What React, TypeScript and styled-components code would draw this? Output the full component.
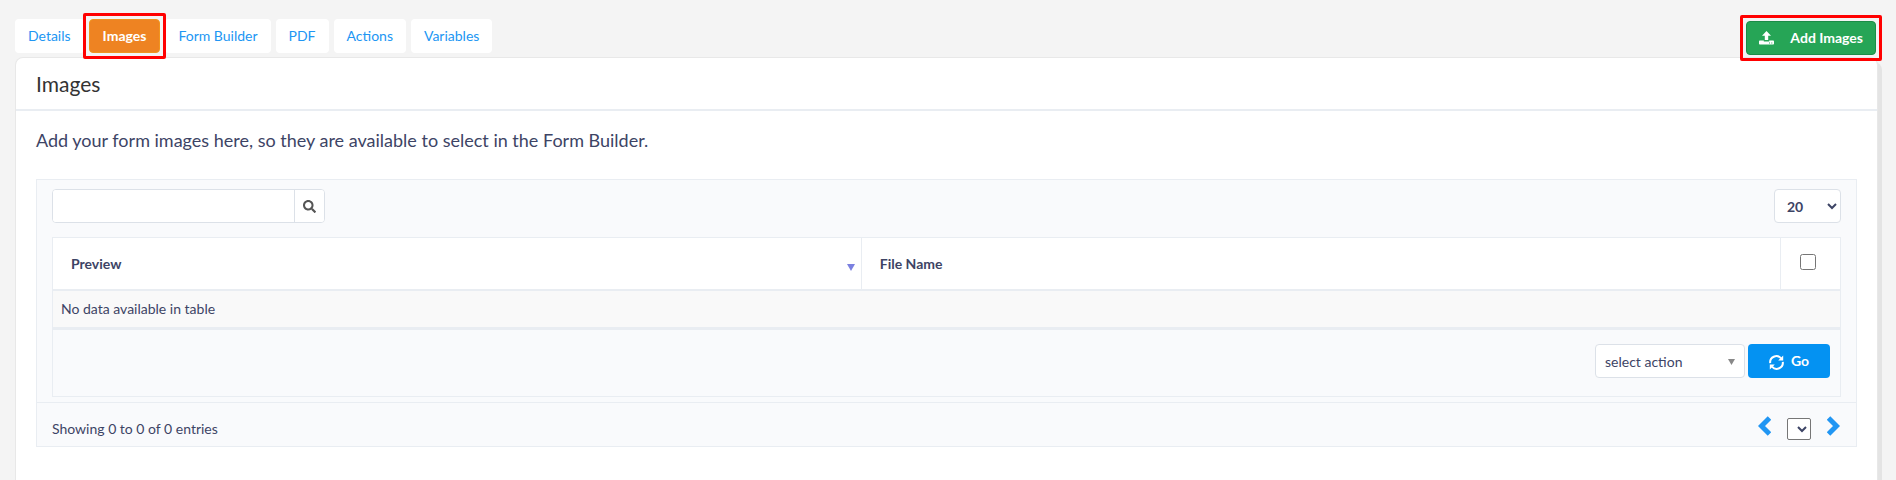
import React from 'react';
import styled, { createGlobalStyle, css } from 'styled-components';
import { FaSearch } from 'react-icons/fa';

const line = '#e9edf2';
const ink = '#3d4465';
const link = '#2196f3';

const GlobalStyle = createGlobalStyle`
  * { box-sizing: border-box; }
  body {
    margin: 0;
    background: #f4f4f4;
    color: ${ink};
    font: 14px/20px Lato, "Liberation Sans", sans-serif;
  }
  button, input, select { font: inherit; color: inherit; margin: 0; }
`;

const Page = styled.main`
  display: flex;
  flex-direction: column;
  min-height: 100vh;
  padding: 19px 18px 0 15px;
`;

const TopBar = styled.div`
  display: flex;
  justify-content: space-between;
  align-items: flex-start;
  height: 38px;
`;

const Tabs = styled.nav`
  display: flex;
  gap: 5px;
`;

const highlight = css`
  position: relative;
  z-index: 1;
  &::after {
    content: '';
    position: absolute;
    inset: -7px;
    border: 3px solid #f00;
    border-radius: 2px;
    pointer-events: none;
  }
`;

const Tab = styled.a<{ $active?: boolean }>`
  height: 34px;
  padding: 7px 13px;
  border-radius: 4px;
  background: #fff;
  color: ${link};
  text-decoration: none;
  ${(p) =>
    p.$active &&
    css`
      ${highlight}
      padding: 6px 13px;
      border: 1px solid #f0941d;
      background: #ee8322;
      color: #fff;
      font-weight: 700;
    `}
`;

const AddButton = styled.button`
  ${highlight}
  display: flex;
  align-items: center;
  gap: 16px;
  height: 34px;
  margin: 2px 2px 0 0;
  padding: 0 12px;
  border: 1px solid #1c8c47;
  border-radius: 4px;
  background: #26a556;
  color: #fff;
  font-weight: 700;
`;

const Card = styled.section`
  flex: 1;
  border: 1px solid #e8e8e8;
  border-bottom: 0;
  border-radius: 8px 8px 0 0;
  background: #fff;
  box-shadow: 4px 5px 0 #e4e4e4;
`;

const CardTitle = styled.h1`
  margin: 0;
  padding: 15px 20px 14px;
  border-bottom: 2px solid ${line};
  color: #333;
  font-size: 21px;
  line-height: 22px;
  font-weight: 400;
`;

const CardBody = styled.div`
  padding: 17px 20px;
`;

const Intro = styled.p`
  margin: 0 0 27px;
  font-size: 18px;
  line-height: 24px;
`;

const Panel = styled.div`
  border: 1px solid ${line};
  background: #f9fafc;
`;

const Tools = styled.div`
  display: flex;
  justify-content: space-between;
  padding: 9px 15px 14px;
`;

const SearchBox = styled.form`
  display: flex;
  width: 273px;
  height: 34px;
  border: 1px solid #dce1e8;
  border-radius: 4px;
  background: #fff;
  overflow: hidden;
`;

const SearchInput = styled.input`
  flex: 1;
  min-width: 0;
  padding: 0 12px;
  border: 0;
  border-right: 1px solid #dce1e8;
`;

const SearchButton = styled.button`
  display: grid;
  place-items: center;
  width: 29px;
  padding: 0;
  border: 0;
  background: #fff;
  color: #555;
`;

const PageSize = styled.select`
  width: 67px;
  height: 34px;
  padding: 0 0 0 8px;
  border: 1px solid #dce1e8;
  border-radius: 4px;
  background: #fff;
  font-weight: 700;
`;

const TableWrap = styled.div`
  padding: 0 15px 5px;
`;

const Table = styled.table`
  width: 100%;
  table-layout: fixed;
  border: 1px solid ${line};
  border-spacing: 0;
`;

const HeadCell = styled.th<{ $width?: string; $tick?: boolean }>`
  width: ${(p) => p.$width || 'auto'};
  height: 53px;
  padding: ${(p) => (p.$tick ? '0' : '0 6px 0 18px')};
  border-bottom: 2px solid ${line};
  background: #fff;
  text-align: left;
  & + & { border-left: 1px solid ${line}; }
`;

const SortLabel = styled.span`
  display: flex;
  align-items: center;
  justify-content: space-between;
`;

const Triangle = styled.svg<{ $size: number }>`
  width: ${(p) => p.$size}px;
  height: ${(p) => p.$size}px;
  fill: currentColor;
`;

const SortMark = styled(Triangle)`
  margin-top: 6px;
  color: #7b80e0;
`;

const Tick = styled.input`
  display: block;
  width: 16px;
  height: 16px;
  margin: 0 0 4px 19px;
`;

const EmptyCell = styled.td`
  height: 39px;
  padding: 0 8px;
  border-bottom: 3px solid ${line};
  background: #f9f9f9;
`;

const FootCell = styled.td`
  height: 66px;
  padding: 14px 10px 0 0;
  vertical-align: top;
`;

const Actions = styled.div`
  display: flex;
  justify-content: flex-end;
  gap: 3px;
`;

const ActionField = styled.div`
  display: grid;
  align-items: center;
  width: 150px;
  & > * { grid-area: 1 / 1; }
`;

const ActionSelect = styled.select`
  appearance: none;
  width: 100%;
  height: 34px;
  padding: 2px 9px 0;
  border: 1px solid #dce1e8;
  border-radius: 4px;
  background: #fff;
`;

const ActionMark = styled(Triangle)`
  justify-self: end;
  margin-right: 10px;
  color: #888;
  pointer-events: none;
`;

const GoButton = styled.button`
  display: flex;
  align-items: center;
  justify-content: center;
  gap: 7px;
  width: 82px;
  height: 34px;
  padding: 0;
  border: 0;
  border-radius: 4px;
  background: #0492f2;
  color: #fff;
  font-weight: 700;
  & svg { margin-top: 3px; }
`;

const PanelFoot = styled.div`
  display: flex;
  align-items: center;
  justify-content: space-between;
  height: 44px;
  padding: 8px 16px 0 15px;
  border-top: 1px solid ${line};
`;

const Pager = styled.div`
  display: flex;
  align-items: center;
  gap: 16px;
  margin-top: -6px;
`;

const PagerLink = styled.a`
  display: flex;
  color: ${link};
`;

const PagerSelect = styled.select`
  width: 24px;
  height: 22px;
  margin-top: 6px;
  padding: 0;
  border: 1px solid #767676;
  border-radius: 2px;
  background: #fff;
`;

const Down = ({ as: Mark, size }: { as: typeof Triangle; size: number }) => (
  <Mark $size={size} viewBox="0 0 8 8" aria-hidden="true">
    <path d="M0 1h8L4 8z" />
  </Mark>
);

const UploadIcon = () => (
  <svg width="15" height="14" viewBox="0 0 15 14" fill="currentColor" aria-hidden="true">
    <path d="M7.5 0L12 4.8H9.2V9H5.8V4.8H3z" />
    <path fillRule="evenodd" d="M.8 9.6H4.8V10.6H10.2V9.6H14.2Q15 9.6 15 10.4V12.8Q15 13.6 14.2 13.6H.8Q0 13.6 0 12.8V10.4Q0 9.6 .8 9.6zM10 11.6V12.6H11V11.6zM12.3 11.6V12.6H13.3V11.6z" />
  </svg>
);

const RefreshIcon = () => (
  <svg width="15" height="15" viewBox="0 0 15 15" aria-hidden="true">
    <g fill="none" stroke="currentColor" strokeWidth="2">
      <path d="M1.2 8.2A6.2 6.2 0 0 1 12 3.3" />
      <path d="M13.8 6.8A6.2 6.2 0 0 1 3 11.7" />
    </g>
    <path fill="currentColor" d="M14.2 .6V5.6H9.2zM.8 14.4V9.4H5.8z" />
  </svg>
);

const Chevron = ({ d }: { d: string }) => (
  <svg width="13" height="20" viewBox="0 0 13 20" fill="none" stroke="currentColor" strokeWidth="5" aria-hidden="true">
    <path d={d} />
  </svg>
);

const tabs = ['Details', 'Images', 'Form Builder', 'PDF', 'Actions', 'Variables'];

export default function App() {
  return (
    <>
      <GlobalStyle />
      <Page>
        <TopBar>
          <Tabs>
            {tabs.map((t) => (
              <Tab key={t} href="#" $active={t === 'Images'}>{t}</Tab>
            ))}
          </Tabs>
          <AddButton type="button"><UploadIcon />Add Images</AddButton>
        </TopBar>
        <Card>
          <CardTitle>Images</CardTitle>
          <CardBody>
            <Intro>Add your form images here, so they are available to select in the Form Builder.</Intro>
            <Panel>
              <Tools>
                <SearchBox>
                  <SearchInput type="text" aria-label="Search" />
                  <SearchButton type="button" aria-label="Search"><FaSearch size={13} /></SearchButton>
                </SearchBox>
                <PageSize aria-label="Entries per page"><option>20</option></PageSize>
              </Tools>
              <TableWrap>
                <Table>
                  <thead>
                    <tr>
                      <HeadCell $width="45.2%"><SortLabel>Preview<Down as={SortMark} size={8} /></SortLabel></HeadCell>
                      <HeadCell>File Name</HeadCell>
                      <HeadCell $width="60px" $tick><Tick type="checkbox" aria-label="Select all" /></HeadCell>
                    </tr>
                  </thead>
                  <tbody>
                    <tr><EmptyCell colSpan={3}>No data available in table</EmptyCell></tr>
                  </tbody>
                  <tfoot>
                    <tr>
                      <FootCell colSpan={3}>
                        <Actions>
                          <ActionField>
                            <ActionSelect aria-label="Action"><option>select action</option></ActionSelect>
                            <Down as={ActionMark} size={7} />
                          </ActionField>
                          <GoButton type="button"><RefreshIcon />Go</GoButton>
                        </Actions>
                      </FootCell>
                    </tr>
                  </tfoot>
                </Table>
              </TableWrap>
              <PanelFoot>
                <span>Showing 0 to 0 of 0 entries</span>
                <Pager>
                  <PagerLink href="#" aria-label="Previous page"><Chevron d="M11.5 2L3.5 10L11.5 18" /></PagerLink>
                  <PagerSelect aria-label="Page" />
                  <PagerLink href="#" aria-label="Next page"><Chevron d="M1.5 2L9.5 10L1.5 18" /></PagerLink>
                </Pager>
              </PanelFoot>
            </Panel>
          </CardBody>
        </Card>
      </Page>
    </>
  );
}
